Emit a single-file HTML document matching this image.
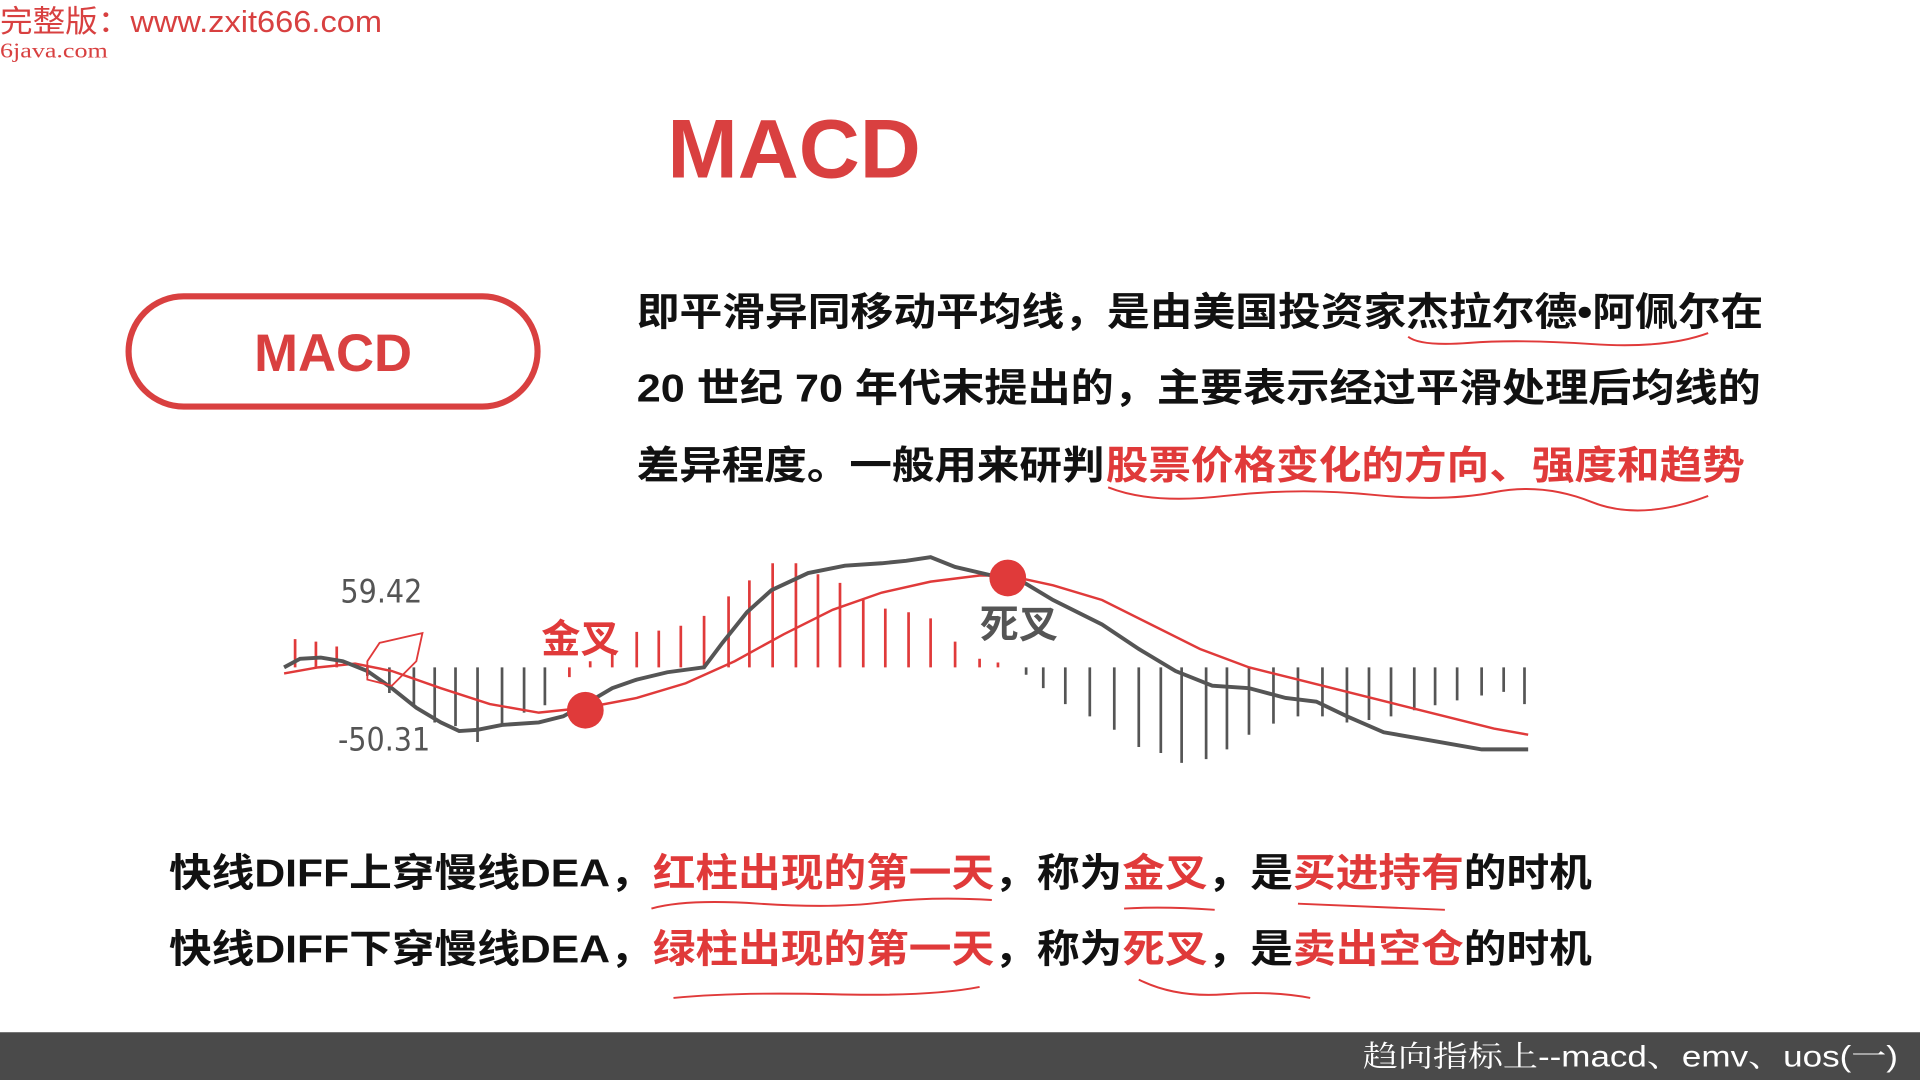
<!DOCTYPE html>
<html><head><meta charset="utf-8"><style>
html,body{margin:0;padding:0;background:#fff;width:1920px;height:1080px;overflow:hidden}
svg{display:block}
text{font-family:"Liberation Sans","Noto Sans CJK SC",sans-serif}
</style></head><body>
<svg width="1920" height="1080" viewBox="0 0 1568 882" preserveAspectRatio="none" xmlns="http://www.w3.org/2000/svg">
<rect width="1568" height="882" fill="#fff"/>
<text x="0" y="26" font-size="25" fill="#d84040" textLength="312" lengthAdjust="spacingAndGlyphs">完整版：www.zxit666.com</text>
<text x="0" y="47" font-size="17" fill="#d84040" style="font-family:'Liberation Serif',serif" textLength="88" lengthAdjust="spacingAndGlyphs">6java.com</text>
<text x="545" y="145" font-size="68" font-weight="bold" fill="#d94040" textLength="207" lengthAdjust="spacingAndGlyphs">MACD</text>
<rect x="105" y="242" width="334" height="90" rx="45" fill="#fff" stroke="#d94040" stroke-width="5"/>
<text x="272" y="303" font-size="43" font-weight="bold" fill="#d94040" text-anchor="middle">MACD</text>
<g font-size="32" font-weight="bold" fill="#111">
<text x="520" y="266" textLength="920" lengthAdjust="spacingAndGlyphs">即平滑异同移动平均线，是由美国投资家杰拉尔德•阿佩尔在</text>
<text x="520" y="328" textLength="918" lengthAdjust="spacingAndGlyphs">20 世纪 70 年代末提出的，主要表示经过平滑处理后均线的</text>
<text x="520" y="391" textLength="382" lengthAdjust="spacingAndGlyphs">差异程度。一般用来研判</text>
<text x="903" y="391" textLength="522" lengthAdjust="spacingAndGlyphs" fill="#e03a3a">股票价格变化的方向、强度和趋势</text>
</g>
<g fill="none" stroke="#e03a3a" stroke-width="1.6">
<path d="M1150 275 Q1160 283 1200 280 T1300 281 T1395 272"/>
<path d="M905 398 Q940 412 1000 405 T1120 404 T1220 402 T1300 410 T1395 405"/>
<path d="M532 742 Q560 734 620 738 T720 737 T810 735"/>
<path d="M918 742 Q950 740 992 743"/>
<path d="M1060 738 Q1110 740 1180 743"/>
<path d="M550 815 Q600 810 680 812 T800 806"/>
<path d="M930 800 Q960 815 1000 812 T1070 815"/>
</g>
<text x="278" y="492" font-size="26" fill="#555" style="font-family:'DejaVu Sans Condensed','Liberation Sans Narrow',sans-serif">59.42</text>
<text x="276" y="613" font-size="26" fill="#555" style="font-family:'DejaVu Sans Condensed','Liberation Sans Narrow',sans-serif">-50.31</text>
<path fill="none" stroke="#e03a3a" stroke-width="2.2" d="M241 545V522M258 545V524M275 545V528M465 545V553M482 545V540M500 545V530M520 545V516M538 545V515M556 545V511M575 545V503M595 545V487M612 545V474M631 545V460M650 545V460M668 545V469M686 545V476M705 545V490M723 545V497M742 545V500M760 545V505M780 545V524M800 545V538M815 545V541"/>
<path fill="none" stroke="#555" stroke-width="2.2" d="M300 545V552M318 545V566M338 545V576M355 545V590M372 545V593M390 545V606M410 545V592M428 545V582M445 545V576M838 545V551M852 545V562M870 545V575M890 545V585M910 545V596M930 545V610M948 545V615M965 545V623M985 545V620M1002 545V612M1020 545V600M1040 545V591M1060 545V585M1080 545V585M1100 545V590M1118 545V588M1136 545V585M1155 545V580M1172 545V576M1190 545V572M1210 545V568M1228 545V565M1245 545V575"/>
<polyline fill="none" stroke="#e03a3a" stroke-width="2" points="232,550 260,545 290,542 320,548 360,562 400,575 440,582 478,578 520,570 560,558 600,540 640,518 680,498 720,484 760,475 800,470 823,470 860,478 900,490 940,510 980,530 1020,545 1060,555 1100,565 1140,575 1180,585 1220,595 1248,600"/>
<polyline fill="none" stroke="#555" stroke-width="3.2" points="232,545 245,538 262,537 280,540 300,548 320,562 340,578 360,590 375,597 390,596 410,592 440,590 460,585 478,575 500,562 520,555 545,549 575,545 590,525 610,500 630,482 660,468 690,462 720,460 740,458 760,455 780,463 810,470 835,475 860,490 900,510 930,530 960,548 990,560 1020,562 1050,570 1075,573 1100,585 1130,598 1170,605 1210,612 1248,612"/>
<path fill="none" stroke="#e03a3a" stroke-width="1.5" d="M300 540 L310 525 L345 517 L340 540 L320 560 L300 555 Z"/>
<circle cx="478" cy="580" r="15" fill="#e03a3a"/>
<circle cx="823" cy="472" r="15" fill="#e03a3a"/>
<text x="442" y="533" font-size="32" font-weight="bold" fill="#e03a3a">金叉</text>
<text x="800" y="521" font-size="32" font-weight="bold" fill="#555">死叉</text>
<g font-size="32" font-weight="bold" fill="#111">
<text x="138" y="724" textLength="1162" lengthAdjust="spacingAndGlyphs">快线DIFF上穿慢线DEA，<tspan fill="#e03a3a">红柱出现的第一天</tspan>，称为<tspan fill="#e03a3a">金叉</tspan>，是<tspan fill="#e03a3a">买进持有</tspan>的时机</text>
<text x="138" y="786" textLength="1162" lengthAdjust="spacingAndGlyphs">快线DIFF下穿慢线DEA，<tspan fill="#e03a3a">绿柱出现的第一天</tspan>，称为<tspan fill="#e03a3a">死叉</tspan>，是<tspan fill="#e03a3a">卖出空仓</tspan>的时机</text>
</g>
<rect x="0" y="843" width="1568" height="39" fill="#4a4a4a"/>
<text x="1113" y="871" font-size="24" fill="#fff" textLength="437" lengthAdjust="spacingAndGlyphs" style="font-family:'Liberation Sans','Noto Serif CJK SC',sans-serif">趋向指标上--macd、emv、uos(一)</text>
</svg>
</body></html>
